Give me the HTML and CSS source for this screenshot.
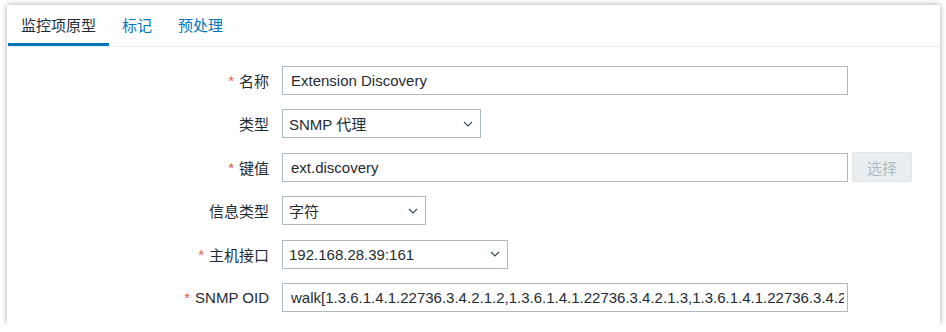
FILE: index.html
```html
<!DOCTYPE html>
<html lang="zh-CN">
  <head>
    <meta charset="UTF-8">
    <meta name="viewport" content="width=device-width, initial-scale=1.0">
    <title>监控项原型</title>
    <link rel="stylesheet" href="styles.css">
  </head>
  <body>
    <main class="card">
      <ul class="tabs">
        <li class="tab active">监控项原型</li>
        <li class="tab">标记</li>
        <li class="tab">预处理</li>
      </ul>

      <form class="form">
        <label class="label"><span class="req">*</span>名称</label>
        <div class="field">
          <input class="input wide" type="text" value="Extension Discovery">
        </div>

        <label class="label">类型</label>
        <div class="field">
          <div class="select type-select">
            <span>SNMP 代理</span>
            <svg class="chevron" width="10" height="6" viewBox="0 0 10 6"><path d="M1 1l4 4 4-4" fill="none" stroke="#3a4a52" stroke-width="1.2"/></svg>
          </div>
        </div>

        <label class="label"><span class="req">*</span>键值</label>
        <div class="field">
          <input class="input wide" type="text" value="ext.discovery">
          <button class="btn" type="button" disabled>选择</button>
        </div>

        <label class="label">信息类型</label>
        <div class="field">
          <div class="select info-select">
            <span>字符</span>
            <svg class="chevron" width="10" height="6" viewBox="0 0 10 6"><path d="M1 1l4 4 4-4" fill="none" stroke="#3a4a52" stroke-width="1.2"/></svg>
          </div>
        </div>

        <label class="label"><span class="req">*</span>主机接口</label>
        <div class="field">
          <div class="select iface-select">
            <span>192.168.28.39:161</span>
            <svg class="chevron" width="10" height="6" viewBox="0 0 10 6"><path d="M1 1l4 4 4-4" fill="none" stroke="#3a4a52" stroke-width="1.2"/></svg>
          </div>
        </div>

        <label class="label"><span class="req">*</span>SNMP OID</label>
        <div class="field">
          <input class="input wide oid" type="text" value="walk[1.3.6.1.4.1.22736.3.4.2.1.2,1.3.6.1.4.1.22736.3.4.2.1.3,1.3.6.1.4.1.22736.3.4.2.1.4]">
        </div>
      </form>
    </main>
  </body>
</html>
```

FILE: styles.css
```css
body {
  margin: 0;
  padding: 0;
  background-color: #ffffff;
  font-family: "Liberation Sans", "Noto Sans CJK SC", sans-serif;
  font-size: 15px;
  color: #1f2c33;
}

.card {
  width: 933px;
  margin: 5px 0 0 7px;
  padding-bottom: 12px;
  background-color: #ffffff;
  box-shadow: 0 0 6px rgba(0, 0, 0, 0.35);
}

.tabs {
  display: flex;
  margin: 0;
  padding: 0 0 0 1px;
  list-style: none;
  border-bottom: 1px solid #ebeef0;
}

.tab {
  padding: 4px 13px 0 13px;
  line-height: 34px;
  border-bottom: 3px solid transparent;
  color: #0275b8;
}

.tab.active {
  color: #1f2c33;
  border-bottom-color: #0275b8;
}

.form {
  display: grid;
  grid-template-columns: 262px 1fr;
  column-gap: 13px;
  row-gap: 14.4px;
  padding-top: 19px;
}

.label {
  display: flex;
  align-items: center;
  justify-content: flex-end;
  height: 29px;
}

.req {
  color: #e45959;
  margin-right: 5px;
}

.field {
  display: flex;
  align-items: center;
  gap: 4px;
  height: 29px;
}

.input {
  box-sizing: border-box;
  height: 29px;
  padding: 0 3px 0 8px;
  border: 1px solid #acbbc2;
  border-radius: 0;
  font-family: inherit;
  font-size: 15px;
  color: #1f2c33;
  background-color: #ffffff;
  outline: none;
}

.wide {
  width: 566px;
}

.select {
  box-sizing: border-box;
  display: flex;
  align-items: center;
  justify-content: space-between;
  height: 29px;
  padding: 0 7px 0 6px;
  border: 1px solid #acbbc2;
  background-color: #ffffff;
}

.type-select {
  width: 199px;
}

.info-select {
  width: 144px;
}

.iface-select {
  width: 226px;
}

.btn {
  box-sizing: border-box;
  width: 60px;
  height: 30px;
  padding: 0;
  border: 1px solid #dfe4e7;
  border-radius: 2px;
  background-color: #ebeef0;
  color: #acbbc2;
  font-family: inherit;
  font-size: 15px;
}
```
